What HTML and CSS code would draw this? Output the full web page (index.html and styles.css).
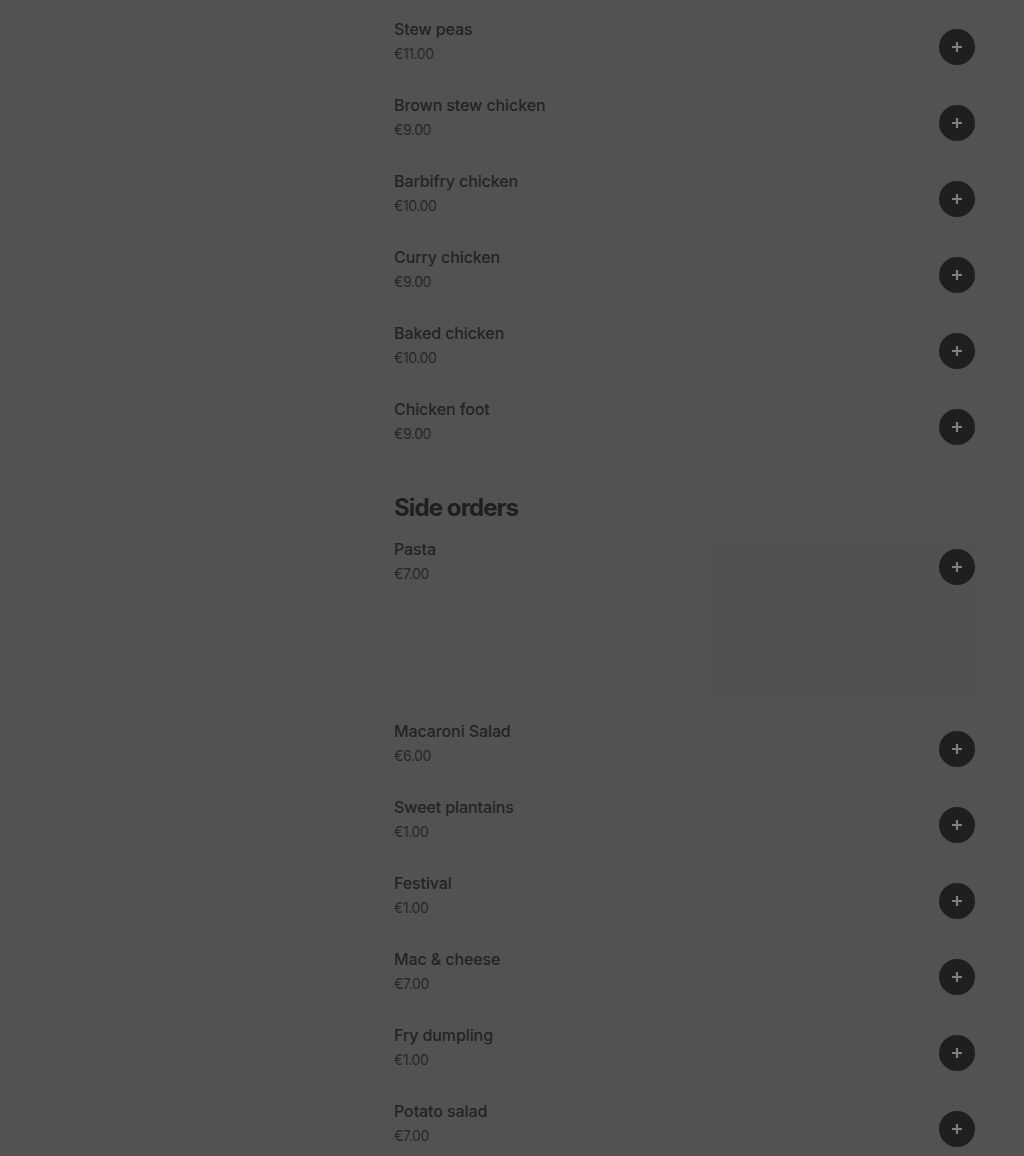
FILE: index.html
```html
<!DOCTYPE html>
<html lang="en">
<head>
    <meta charset="UTF-8">
    <meta name="viewport" content="width=device-width, initial-scale=1.0">
    <title>Menu</title>
    <link rel="stylesheet" href="styles.css">
</head>
<body>

    <div class="menu">
        <ul class="item-list">
            <li class="item">
                <div class="item-info">
                    <div class="item-name">Stew peas</div>
                    <div class="item-price">€11.00</div>
                </div>
                <button class="add-btn" aria-label="Add"><svg viewBox="0 0 12 12"><path d="M6 1v10M1 6h10"/></svg></button>
            </li>
            <li class="item">
                <div class="item-info">
                    <div class="item-name">Brown stew chicken</div>
                    <div class="item-price">€9.00</div>
                </div>
                <button class="add-btn" aria-label="Add"><svg viewBox="0 0 12 12"><path d="M6 1v10M1 6h10"/></svg></button>
            </li>
            <li class="item">
                <div class="item-info">
                    <div class="item-name">Barbifry chicken</div>
                    <div class="item-price">€10.00</div>
                </div>
                <button class="add-btn" aria-label="Add"><svg viewBox="0 0 12 12"><path d="M6 1v10M1 6h10"/></svg></button>
            </li>
            <li class="item">
                <div class="item-info">
                    <div class="item-name">Curry chicken</div>
                    <div class="item-price">€9.00</div>
                </div>
                <button class="add-btn" aria-label="Add"><svg viewBox="0 0 12 12"><path d="M6 1v10M1 6h10"/></svg></button>
            </li>
            <li class="item">
                <div class="item-info">
                    <div class="item-name">Baked chicken</div>
                    <div class="item-price">€10.00</div>
                </div>
                <button class="add-btn" aria-label="Add"><svg viewBox="0 0 12 12"><path d="M6 1v10M1 6h10"/></svg></button>
            </li>
            <li class="item">
                <div class="item-info">
                    <div class="item-name">Chicken foot</div>
                    <div class="item-price">€9.00</div>
                </div>
                <button class="add-btn" aria-label="Add"><svg viewBox="0 0 12 12"><path d="M6 1v10M1 6h10"/></svg></button>
            </li>
        </ul>

        <h2 class="section-title">Side orders</h2>
        <ul class="item-list">
            <li class="item item-with-image">
                <div class="item-info">
                    <div class="item-name">Pasta</div>
                    <div class="item-price">€7.00</div>
                </div>
                <div class="item-image">
                    <button class="add-btn" aria-label="Add"><svg viewBox="0 0 12 12"><path d="M6 1v10M1 6h10"/></svg></button>
                </div>
            </li>
            <li class="item">
                <div class="item-info">
                    <div class="item-name">Macaroni Salad</div>
                    <div class="item-price">€6.00</div>
                </div>
                <button class="add-btn" aria-label="Add"><svg viewBox="0 0 12 12"><path d="M6 1v10M1 6h10"/></svg></button>
            </li>
            <li class="item">
                <div class="item-info">
                    <div class="item-name">Sweet plantains</div>
                    <div class="item-price">€1.00</div>
                </div>
                <button class="add-btn" aria-label="Add"><svg viewBox="0 0 12 12"><path d="M6 1v10M1 6h10"/></svg></button>
            </li>
            <li class="item">
                <div class="item-info">
                    <div class="item-name">Festival</div>
                    <div class="item-price">€1.00</div>
                </div>
                <button class="add-btn" aria-label="Add"><svg viewBox="0 0 12 12"><path d="M6 1v10M1 6h10"/></svg></button>
            </li>
            <li class="item">
                <div class="item-info">
                    <div class="item-name">Mac &amp; cheese</div>
                    <div class="item-price">€7.00</div>
                </div>
                <button class="add-btn" aria-label="Add"><svg viewBox="0 0 12 12"><path d="M6 1v10M1 6h10"/></svg></button>
            </li>
            <li class="item">
                <div class="item-info">
                    <div class="item-name">Fry dumpling</div>
                    <div class="item-price">€1.00</div>
                </div>
                <button class="add-btn" aria-label="Add"><svg viewBox="0 0 12 12"><path d="M6 1v10M1 6h10"/></svg></button>
            </li>
            <li class="item">
                <div class="item-info">
                    <div class="item-name">Potato salad</div>
                    <div class="item-price">€7.00</div>
                </div>
                <button class="add-btn" aria-label="Add"><svg viewBox="0 0 12 12"><path d="M6 1v10M1 6h10"/></svg></button>
            </li>
        </ul>
    </div>

</body>
</html>
```

FILE: styles.css
```css
body {
    margin: 0;
    background-color: #525252;
    font-family: Inter, "Liberation Sans", sans-serif;
    color: #232323;
    height: 1156px;
    overflow: hidden;
}
.menu {
    width: 590px;
    margin-left: 394px;
    padding-top: 19px;
}
.item-list {
    list-style: none;
    margin: 0;
    padding: 0;
}
.item {
    display: flex;
    justify-content: space-between;
    align-items: flex-start;
    height: 76px;
    padding-right: 9px;
}
.item-name {
    font-size: 16px;
    line-height: 20px;
    font-weight: 500;
    letter-spacing: -0.1px;
}
.item-price {
    margin-top: 5px;
    font-size: 14px;
    line-height: 20px;
    color: #282828;
    letter-spacing: -0.4px;
}
.add-btn {
    width: 36px;
    height: 36px;
    margin-top: 10px;
    padding: 0;
    border: none;
    border-radius: 50%;
    background-color: #1f1f1f;
    display: flex;
    align-items: center;
    justify-content: center;
    cursor: pointer;
}
.add-btn svg {
    width: 12px;
    height: 12px;
    stroke: #808080;
    stroke-width: 2.2;
    fill: none;
}
.section-title {
    margin: 17px 0 15px;
    font-size: 24px;
    line-height: 32px;
    font-weight: 700;
    color: #1f1f1f;
    letter-spacing: -0.9px;
}
.item-with-image {
    height: 182px;
    padding-right: 0;
}
.item-image {
    position: relative;
    width: 276px;
    height: 156px;
    margin-top: 2px;
    box-sizing: border-box;
    background-color: #515151;
    border: 1px solid #535353;
    border-radius: 4px;
}
.item-image .add-btn {
    position: absolute;
    top: 7px;
    right: 8px;
    margin-top: 0;
}
```
